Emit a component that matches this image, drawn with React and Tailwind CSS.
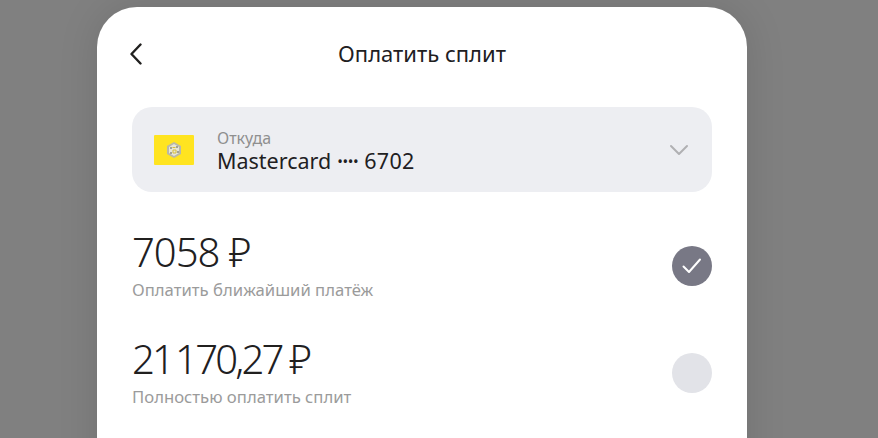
import React from 'react';

const font = { fontFamily: '"Noto Sans", sans-serif' };

function PayOption({ amount, label, selected, tight }) {
  return (
    <div className="flex items-center justify-between h-[107px]">
      <div className="flex flex-col">
        <span className={`text-[40px] font-light leading-[46px] text-[#21201f] -mt-[3px] ${tight ? 'tracking-[-2.8px]' : 'tracking-[-1px]'}`}>{amount}</span>
        <span className="text-[16.7px] leading-[20px] mt-[5px] text-[#9b9b9b]">{label}</span>
      </div>
      {selected ? (
        <div className="w-10 h-10 rounded-full bg-[#787885] flex items-center justify-center">
          <svg width="20" height="20" viewBox="0 0 20 20" fill="none">
            <path d="M1.5 10.5 L7 16 L18 3.5" stroke="white" strokeWidth="2" strokeLinecap="round" strokeLinejoin="round" />
          </svg>
        </div>
      ) : (
        <div className="w-10 h-10 rounded-full bg-[#e2e3e8]" />
      )}
    </div>
  );
}

export default function App() {
  return (
    <div className="h-[438px] overflow-hidden bg-[#808080] pt-[7px] pl-[97px]" style={font}>
      <div className="w-[650px] h-[500px] bg-white rounded-t-[40px] px-[35px] shadow-[0_0_40px_rgba(0,0,0,0.12)]">
        {/* Header */}
        <div className="relative h-[100px] flex items-start justify-center pt-[30px]">
          <button className="absolute -left-[2px] top-[36px] text-[#21201f]">
            <svg width="12" height="22" viewBox="0 0 12 22" fill="none">
              <path d="M10.5 1.5 L1.5 11 L10.5 20.5" stroke="currentColor" strokeWidth="2.4" strokeLinecap="round" strokeLinejoin="round" />
            </svg>
          </button>
          <h1 className="text-[22px] leading-[32px] text-[#21201f]">Оплатить сплит</h1>
        </div>

        {/* Card select */}
        <div className="h-[85px] rounded-[20px] bg-[#edeef2] flex items-center pl-[23px] pr-[23px]">
          <div className="w-10 h-[30px] rounded-[1px] bg-[#ffe420] flex items-center justify-center -ml-[1px]">
            <svg width="20" height="20" viewBox="0 0 20 20">
              <polygon points="10,2 17,6 17,14 10,18 3,14 3,6" fill="#b9b8a8" />
              <polygon points="10,4 15,7 15,13 10,16 5,13 5,7" fill="#e6e5d8" />
              <circle cx="7" cy="8" r="1" fill="#8d8c80" />
              <circle cx="13" cy="7" r="1" fill="#8d8c80" />
              <circle cx="14" cy="12" r="1" fill="#8d8c80" />
              <circle cx="7" cy="13" r="1" fill="#8d8c80" />
              <path d="M8.5 7.5 H11.5 M9 10 H12 V13 H9 Z" stroke="#d8bf3a" strokeWidth="1" fill="none" />
            </svg>
          </div>
          <div className="ml-[23px] flex flex-col flex-1 pt-[4px]">
            <span className="text-[16px] leading-[18px] text-[#8f8f8f]">Откуда</span>
            <span className="text-[21.5px] leading-[28px] text-[#21201f] flex items-center">
              Mastercard
              <span className="text-[15px] tracking-[-0.4px] ml-[6px] mr-[6px]">••••</span>
              <span className="tracking-[0.3px]">6702</span>
            </span>
          </div>
          <svg width="20" height="12" viewBox="0 0 20 12" fill="none">
            <path d="M2 2 L10 10 L18 2" stroke="#b0b0b3" strokeWidth="2" strokeLinecap="round" strokeLinejoin="round" />
          </svg>
        </div>

        {/* Options */}
        <div className="mt-[20px]">
          <PayOption amount="7058 ₽" label="Оплатить ближайший платёж" selected />
          <PayOption amount={<>21<span className="ml-[3px]">170,27 ₽</span></>} label="Полностью оплатить сплит" tight />
        </div>
      </div>
    </div>
  );
}
